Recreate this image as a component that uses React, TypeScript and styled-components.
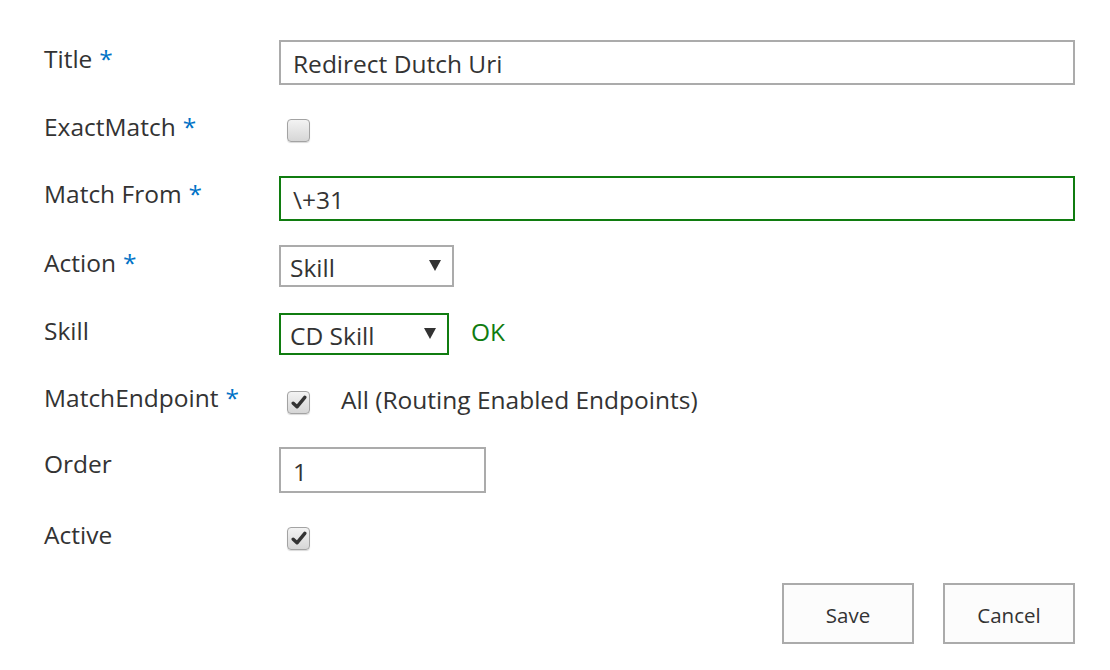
import React from "react";
import styled, { createGlobalStyle } from "styled-components";

const Global = createGlobalStyle`
  html, body { margin: 0; padding: 0; background: #fff; }
  body { font-family: "Open Sans", "Noto Sans", sans-serif; color: #333; }
`;

const Page = styled.div`
  width: 1110px;
  height: 670px;
  box-sizing: border-box;
  padding: 28px 35px 0 44px;
  display: flex;
  flex-direction: column;
`;

const Row = styled.div`
  display: flex;
  align-items: center;
  height: 68px;
`;

const Label = styled.div<{ $top?: number }>`
  width: 235px;
  flex: none;
  align-self: flex-start;
  padding-top: ${(p) => p.$top ?? 14}px;
  font-size: 24.5px;
  line-height: 1.362;
  color: #333;
`;

const Req = styled.span`
  color: #0072c6;
  margin-left: 7px;
`;

const Field = styled.div`
  flex: 1;
  display: flex;
  align-items: center;
`;

const TextBox = styled.div<{ $w?: number; $ok?: boolean; $h?: number }>`
  box-sizing: border-box;
  width: ${(p) => (p.$w ? `${p.$w}px` : "100%")};
  height: ${(p) => p.$h ?? 45}px;
  border: 2px solid ${(p) => (p.$ok ? "#107c10" : "#ababab")};
  padding: 2px 12px 0;
  display: flex;
  align-items: center;
  font-size: 24.5px;
  color: #333;
`;

const Select = styled.div<{ $w: number; $ok?: boolean }>`
  box-sizing: border-box;
  width: ${(p) => p.$w}px;
  height: 42px;
  border: 2px solid ${(p) => (p.$ok ? "#107c10" : "#ababab")};
  padding: 3px 11px 0 9px;
  display: flex;
  align-items: center;
  justify-content: space-between;
  font-size: 24.5px;
  color: #333;
`;

const Arrow = styled.span`
  width: 0;
  height: 0;
  border-left: 6px solid transparent;
  border-right: 6px solid transparent;
  border-top: 11px solid #333;
  margin-top: -5px;
`;

const Ok = styled.span`
  color: #107c10;
  font-size: 24.5px;
  margin-left: 22px;
  margin-top: -5px;
`;

const Check = styled.span`
  box-sizing: border-box;
  width: 23px;
  height: 23px;
  margin-left: 8px;
  border: 1px solid #a3a3a3;
  border-radius: 4px;
  background: linear-gradient(#f3f3f3, #d6d6d6);
  box-shadow: 0 1px 1px rgba(0, 0, 0, 0.15);
  display: flex;
  align-items: center;
  justify-content: center;
`;

const CheckText = styled.span`
  font-size: 24.5px;
  color: #333;
  margin-left: 31px;
  margin-top: -5px;
`;

const Buttons = styled.div`
  display: flex;
  justify-content: flex-end;
  gap: 29px;
  margin-top: 11px;
`;

const Button = styled.button`
  box-sizing: border-box;
  width: 132px;
  height: 61px;
  background: #fcfcfc;
  border: 2px solid #ababab;
  font-family: "Open Sans", "Noto Sans", sans-serif;
  font-size: 20.5px;
  color: #333;
  padding: 2px 0 0;
`;

const Tick = () => (
  <svg width="16" height="15" viewBox="0 0 16 15">
    <path
      d="M2.2 8.2 L6 11.8 L13.8 2.4"
      fill="none"
      stroke="#333"
      strokeWidth="3.4"
      strokeLinecap="round"
      strokeLinejoin="round"
    />
  </svg>
);

export default function App() {
  return (
    <>
      <Global />
      <Page>
        <Row>
          <Label>Title<Req>*</Req></Label>
          <Field><TextBox>Redirect Dutch Uri</TextBox></Field>
        </Row>
        <Row>
          <Label>ExactMatch<Req>*</Req></Label>
          <Field><Check /></Field>
        </Row>
        <Row>
          <Label $top={13}>Match From<Req>*</Req></Label>
          <Field><TextBox $ok>\+31</TextBox></Field>
        </Row>
        <Row>
          <Label>Action<Req>*</Req></Label>
          <Field><Select $w={175}>Skill<Arrow /></Select></Field>
        </Row>
        <Row>
          <Label>Skill</Label>
          <Field>
            <Select $w={170} $ok>CD Skill<Arrow /></Select>
            <Ok>OK</Ok>
          </Field>
        </Row>
        <Row>
          <Label $top={13}>MatchEndpoint<Req>*</Req></Label>
          <Field>
            <Check><Tick /></Check>
            <CheckText>All (Routing Enabled Endpoints)</CheckText>
          </Field>
        </Row>
        <Row>
          <Label $top={11}>Order</Label>
          <Field><TextBox $w={207} $h={46}>1</TextBox></Field>
        </Row>
        <Row>
          <Label>Active</Label>
          <Field><Check><Tick /></Check></Field>
        </Row>
        <Buttons>
          <Button>Save</Button>
          <Button>Cancel</Button>
        </Buttons>
      </Page>
    </>
  );
}
